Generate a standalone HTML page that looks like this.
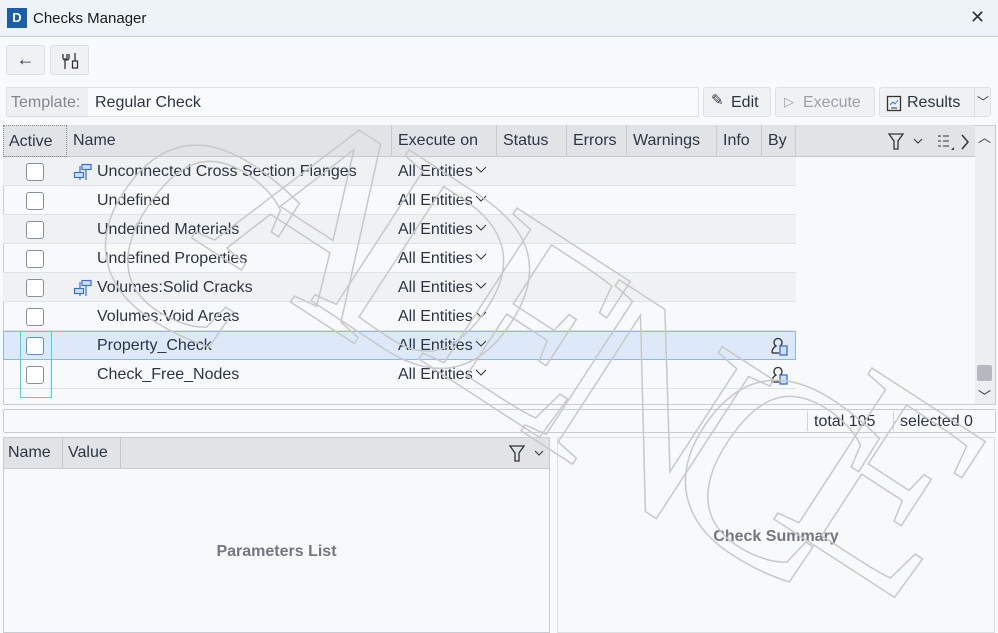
<!DOCTYPE html>
<html><head><meta charset="utf-8"><style>
*{box-sizing:border-box;margin:0;padding:0}
html{overflow:hidden}
body{width:998px;height:633px;overflow:hidden;background:#f8f9fb;font-family:"Liberation Sans",sans-serif;color:#2b3544;position:relative;font-size:16px}
.a{position:absolute}
.btn{position:absolute;background:#f0f1f3;border:1px solid #dcdfe3;border-radius:3px}
.hd{position:absolute;top:125px;height:32px;line-height:32px;padding-left:6px;border-right:1px solid #c8ccd2;font-size:16px}
.row{position:absolute;left:3px;width:793px;height:29px;border-bottom:1px solid #dfe2e6}
.cb{position:absolute;left:23px;top:6px;width:18px;height:18px;border:1px solid #8a9099;border-radius:3px;background:#fff}
.nm{position:absolute;left:94px;top:1px;line-height:28px}
.ex{position:absolute;left:395px;top:1px;line-height:28px;width:77px;overflow:hidden;white-space:nowrap}
.chev{position:absolute;left:472px;top:6px}
</style></head><body>
<div class="a" style="left:0;top:0;width:998px;height:37px;background:#eef3f8;border-bottom:1px solid #c9ced6"></div>
<div class="a" style="left:7px;top:8px;width:20px;height:20px;background:#1b5fa8;color:#fff;font-size:13px;font-weight:bold;text-align:center;line-height:20px">D</div>
<div class="a" style="left:33px;top:10px;font-size:15px;color:#1a1a1a">Checks Manager</div>
<div class="a" style="left:970px;top:7px;font-size:18px;color:#333">✕</div>
<div class="btn" style="left:6px;top:45px;width:39px;height:30px;text-align:center;line-height:26px;font-size:18px">←</div>
<div class="btn" style="left:50px;top:45px;width:39px;height:30px">
<svg width="39" height="30"><g fill="none" stroke="#333" stroke-width="1.3"><path d="M12 8v4a2 2 0 0 0 4 0V8M14 14v9M18 8v4a2 2 0 0 1-4 0"/><path d="M24 7v8M21.5 15h5v7h-5z"/></g></svg></div>
<div class="a" style="left:6px;top:87px;width:693px;height:30px;border:1px solid #dcdfe3;background:#f9fafc;border-radius:2px"></div>
<div class="a" style="left:7px;top:88px;width:81px;height:28px;background:#eef0f2"></div>
<div class="a" style="left:11px;top:94px;color:#808791">Template:</div>
<div class="a" style="left:95px;top:94px">Regular Check</div>
<div class="btn" style="left:703px;top:87px;width:68px;height:30px"><span class="a" style="left:7px;top:3px;font-size:15px">✎</span><span class="a" style="left:27px;top:6px">Edit</span></div>
<div class="btn" style="left:775px;top:87px;width:100px;height:30px;color:#9aa0a8"><span class="a" style="left:8px;top:6px;font-size:13px">▷</span><span class="a" style="left:27px;top:6px">Execute</span></div>
<div class="btn" style="left:879px;top:87px;width:112px;height:30px"><svg class="a" style="left:6px;top:6px" width="16" height="18"><rect x="1.5" y="2.5" width="13" height="14" fill="none" stroke="#333" stroke-width="1.3"/><path d="M4 11l3-3 2 2 3-4" stroke="#3a7be0" fill="none"/><path d="M5 14h6" stroke="#333"/></svg><span class="a" style="left:27px;top:6px">Results</span><span class="a" style="left:94px;top:0;height:28px;border-left:1px solid #dcdfe3;padding-left:2px;line-height:28px;font-size:12px">﹀</span></div>
<div class="a" style="left:3px;top:125px;width:993px;height:280px;border:1px solid #c8ccd2;background:#f8f9fb"></div>
<div class="a" style="left:3px;top:125px;width:972px;height:32px;background:#e1e3e7;border-bottom:1px solid #c3c8ce"></div>
<div class="hd" style="left:3px;width:64px;border:1px dotted #888;padding-left:5px">Active</div>
<div class="hd" style="left:67px;width:325px">Name</div>
<div class="hd" style="left:392px;width:105px">Execute on</div>
<div class="hd" style="left:497px;width:70px">Status</div>
<div class="hd" style="left:567px;width:60px">Errors</div>
<div class="hd" style="left:627px;width:90px">Warnings</div>
<div class="hd" style="left:717px;width:45px">Info</div>
<div class="hd" style="left:762px;width:34px">By</div>
<svg class="a" style="left:885px;top:131px" width="90" height="22"><path d="M4 3h14l-5 7v8h-4v-8z" fill="none" stroke="#333" stroke-width="1.3"/><path d="M29 8l4 4 4-4" fill="none" stroke="#333"/><g stroke="#333"><path d="M53 5h3M58 5h6M53 10h3M58 10h6M53 15h3M58 15h6"/></g><path d="M66 19l3-3v3z" fill="#333"/><path d="M77 4l6 7-6 7" fill="none" stroke="#333" stroke-width="1.5"/></svg>
<div class="a" style="left:975px;top:126px;width:20px;height:278px;background:#eceef1"></div>
<div class="a" style="left:978px;top:127px;font-size:13px">︿</div>
<div class="a" style="left:977px;top:365px;width:15px;height:16px;background:#b5b9bf;border-radius:2px"></div>
<div class="a" style="left:978px;top:386px;font-size:13px">﹀</div>

<div class="row" style="top:157px;background:#f0f1f3"><div class="cb"></div><svg class="a" style="left:70px;top:6px" width="20" height="18"><g fill="#cfe0fb" stroke="#3a6fd0" stroke-width="1.2"><rect x="9" y="1.5" width="9" height="5"/><rect x="1.5" y="9.5" width="9" height="5"/></g><path d="M7 3v6M7 15v2M13 7v10" stroke="#3a6fd0" stroke-width="1.2"/></svg><div class="nm">Unconnected Cross Section Flanges</div><div class="ex">All Entities</div><svg class="chev" width="12" height="12"><path d="M1 4l5 5 5-5" fill="none" stroke="#333"/></svg></div>
<div class="row" style="top:186px"><div class="cb"></div><div class="nm">Undefined</div><div class="ex">All Entities</div><svg class="chev" width="12" height="12"><path d="M1 4l5 5 5-5" fill="none" stroke="#333"/></svg></div>
<div class="row" style="top:215px;background:#f0f1f3"><div class="cb"></div><div class="nm">Undefined Materials</div><div class="ex">All Entities</div><svg class="chev" width="12" height="12"><path d="M1 4l5 5 5-5" fill="none" stroke="#333"/></svg></div>
<div class="row" style="top:244px"><div class="cb"></div><div class="nm">Undefined Properties</div><div class="ex">All Entities</div><svg class="chev" width="12" height="12"><path d="M1 4l5 5 5-5" fill="none" stroke="#333"/></svg></div>
<div class="row" style="top:273px;background:#f0f1f3"><div class="cb"></div><svg class="a" style="left:70px;top:6px" width="20" height="18"><g fill="#cfe0fb" stroke="#3a6fd0" stroke-width="1.2"><rect x="9" y="1.5" width="9" height="5"/><rect x="1.5" y="9.5" width="9" height="5"/></g><path d="M7 3v6M7 15v2M13 7v10" stroke="#3a6fd0" stroke-width="1.2"/></svg><div class="nm">Volumes:Solid Cracks</div><div class="ex">All Entities</div><svg class="chev" width="12" height="12"><path d="M1 4l5 5 5-5" fill="none" stroke="#333"/></svg></div>
<div class="row" style="top:302px"><div class="cb"></div><div class="nm">Volumes:Void Areas</div><div class="ex">All Entities</div><svg class="chev" width="12" height="12"><path d="M1 4l5 5 5-5" fill="none" stroke="#333"/></svg></div>
<div class="row" style="top:331px;background:#dde9f8;border:1px solid #8fb5ee"><div class="cb" style="border-color:#5a8fe0;left:22px;top:5px"></div><div class="nm" style="left:93px;top:0">Property_Check</div><div class="ex" style="left:394px;top:0">All Entities</div><svg class="chev" width="12" height="12" style="left:471px;top:5px"><path d="M1 4l5 5 5-5" fill="none" stroke="#333"/></svg><svg class="a" style="left:765px;top:3px" width="22" height="22"><path d="M3 18c0-4 2-6 4-7a4 4 0 1 1 4 0" fill="none" stroke="#333" stroke-width="1.3"/><path d="M3 18h7" stroke="#333" stroke-width="1.3"/><rect x="11" y="11" width="7" height="9" fill="#cfe0fb" stroke="#3a6fd0" stroke-width="1.3"/></svg></div>
<div class="row" style="top:360px"><div class="cb"></div><div class="nm">Check_Free_Nodes</div><div class="ex">All Entities</div><svg class="chev" width="12" height="12"><path d="M1 4l5 5 5-5" fill="none" stroke="#333"/></svg><svg class="a" style="left:766px;top:4px" width="22" height="22"><path d="M3 18c0-4 2-6 4-7a4 4 0 1 1 4 0" fill="none" stroke="#333" stroke-width="1.3"/><path d="M3 18h7" stroke="#333" stroke-width="1.3"/><rect x="11" y="11" width="7" height="9" fill="#cfe0fb" stroke="#3a6fd0" stroke-width="1.3"/></svg></div>
<div class="a" style="left:20px;top:331px;width:32px;height:67px;border:1px solid #2de0e8"></div>
<div class="a" style="left:3px;top:409px;width:993px;height:24px;border:1px solid #c8ccd2;border-radius:2px"></div>
<div class="a" style="left:807px;top:411px;height:20px;border-left:1px solid #d0d3d8"></div>
<div class="a" style="left:893px;top:411px;height:20px;border-left:1px solid #d0d3d8"></div>
<div class="a" style="left:814px;top:413px">total 105</div>
<div class="a" style="left:900px;top:413px">selected 0</div>
<div class="a" style="left:3px;top:437px;width:547px;height:196px;border:1px solid #c8ccd2"></div>
<div class="a" style="left:3px;top:437px;width:547px;height:32px;background:#e1e3e7;border:1px solid #c8ccd2"></div>
<div class="a" style="left:3px;top:437px;width:60px;height:32px;border-right:1px solid #c3c8ce;padding:7px 0 0 5px">Name</div>
<div class="a" style="left:63px;top:437px;width:58px;height:32px;border-right:1px solid #c3c8ce;padding:7px 0 0 5px">Value</div>
<svg class="a" style="left:506px;top:443px" width="42" height="22"><path d="M4 3h14l-5 7v8h-4v-8z" fill="none" stroke="#333" stroke-width="1.3"/><path d="M29 8l4 4 4-4" fill="none" stroke="#333"/></svg>
<div class="a" style="left:3px;top:543px;width:547px;text-align:center;font-weight:bold;color:#727880">Parameters List</div>
<div class="a" style="left:557px;top:437px;width:438px;height:196px;border:1px solid #dcdfe3"></div>
<div class="a" style="left:557px;top:528px;width:438px;text-align:center;font-weight:bold;color:#727880">Check Summary</div>
<svg class="a" style="left:0;top:0;pointer-events:none" width="998" height="633"><g font-family="Liberation Serif,serif" font-size="275" fill="none" stroke="#c8c8c8" stroke-width="1.5" text-anchor="middle">
<text transform="translate(195,230) rotate(33)" dy="96">C</text>
<text transform="translate(325,210) rotate(33)" dy="96">A</text>
<text transform="translate(440,270) rotate(33)" dy="96">D</text>
<text transform="translate(535,320) rotate(33)" dy="96">E</text>
<text transform="translate(650,400) rotate(33)" dy="96">N</text>
<text transform="translate(775,465) rotate(33)" dy="96">C</text>
<text transform="translate(890,480) rotate(33)" dy="96">E</text>
</g></svg>
</body></html>
